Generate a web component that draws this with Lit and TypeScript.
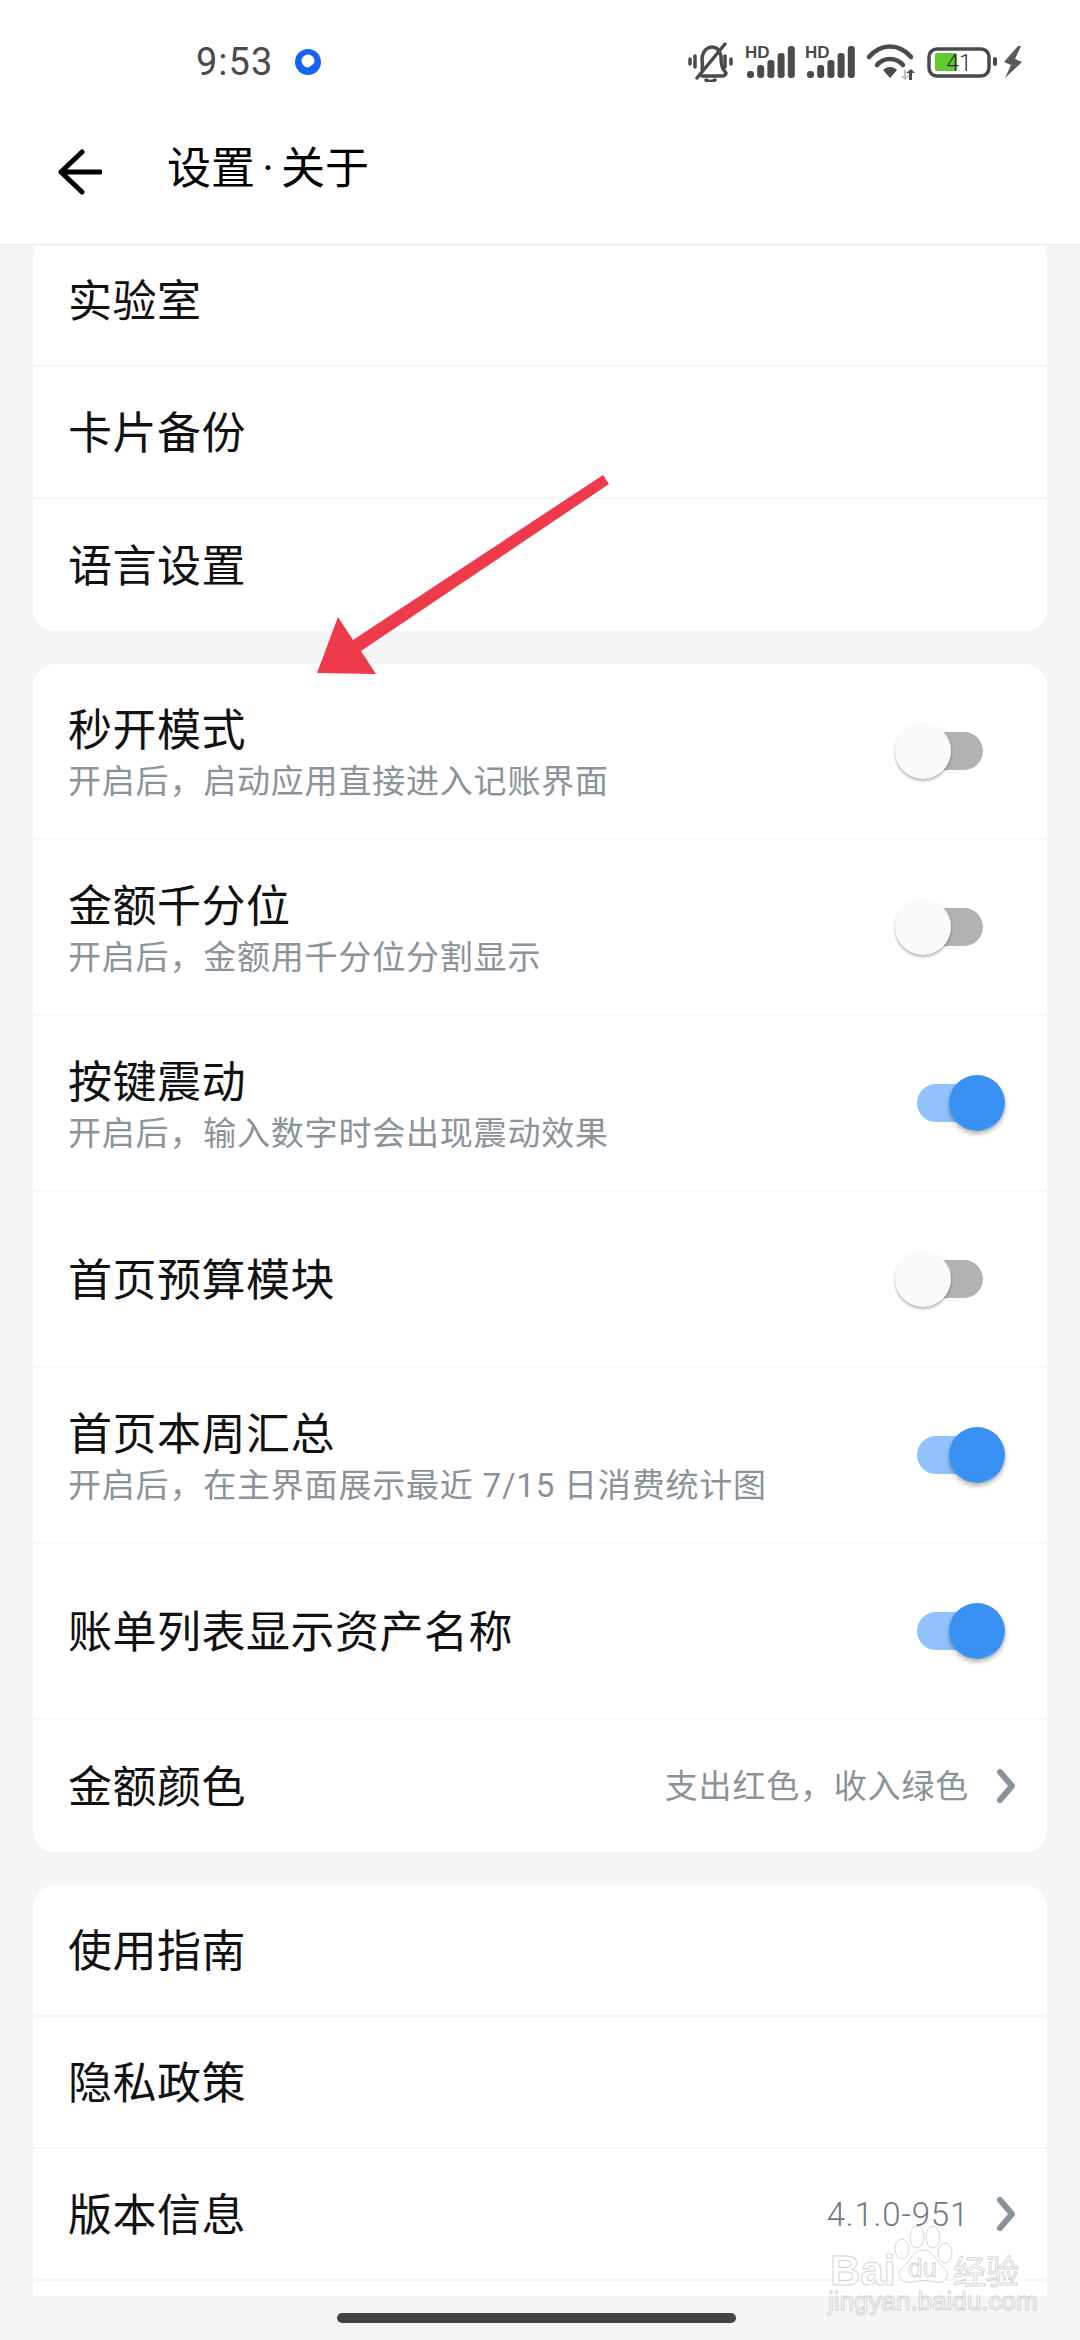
import { LitElement, css, html, svg } from 'lit';
import { customElement } from 'lit/decorators.js';

type Row = { title?: string; sub?: string; on?: boolean; value?: string };

const group1: Row[] = [{ title: '实验室' }, { title: '卡片备份' }, { title: '语言设置' }];
const group2: Row[] = [
  { title: '秒开模式', sub: '开启后，启动应用直接进入记账界面', on: false },
  { title: '金额千分位', sub: '开启后，金额用千分位分割显示', on: false },
  { title: '按键震动', sub: '开启后，输入数字时会出现震动效果', on: true },
  { title: '首页预算模块', on: false },
  { title: '首页本周汇总', sub: '开启后，在主界面展示最近 7/15 日消费统计图', on: true },
  { title: '账单列表显示资产名称', on: true },
  { title: '金额颜色', value: '支出红色，收入绿色' },
];
// last row runs under the nav bar, only its top edge shows
const group3: Row[] = [{ title: '使用指南' }, { title: '隐私政策' }, { title: '版本信息', value: '4.1.0-951' }, {}];

@customElement('app-root')
export class AppRoot extends LitElement {
  static styles = css`
    :host {
      display: flex;
      flex-direction: column;
      position: relative;
      width: 1080px;
      height: 2340px;
      overflow: hidden;
      background: #f4f5f7;
      font-family: "Roboto", "Noto Sans CJK SC", sans-serif;
      color: #111;
    }

    .top {
      flex: none;
      box-sizing: border-box;
      background: #fff;
      height: 245px;
      border-bottom: 1px solid #e6e7e9;
    }

    .status {
      height: 124px;
      padding: 0 52px 0 196px;
      display: flex;
      align-items: center;
      color: #4a4a4a;
    }

    .time {
      font-size: 38px;
      letter-spacing: 1px;
    }

    .dot {
      margin-left: 22px;
    }

    .status-right {
      margin-left: auto;
      display: block;
    }

    .bar {
      display: flex;
      align-items: center;
      height: 96px;
      padding-left: 58px;
    }

    .bar h1 {
      display: flex;
      align-items: center;
      margin: -6px 0 0 65px;
      font-size: 44px;
      line-height: 56px;
      font-weight: 400;
      color: #000;
    }

    .bar .sep {
      width: 26px;
      text-align: center;
    }

    .scroll {
      flex: 1;
      min-height: 0;
      overflow: hidden;
    }

    .list {
      margin-top: -10px;
      padding: 0 33px;
      display: flex;
      flex-direction: column;
      gap: 33px;
    }

    .card {
      background: #fff;
      border-radius: 22px;
      overflow: hidden;
    }

    .row {
      display: flex;
      align-items: center;
      padding: 0 32px 0 35px;
      height: 132px;
      box-sizing: border-box;
      border-bottom: 2px solid #f6f7f8;
    }

    .row:last-child {
      border-bottom: 0;
    }

    .row.tall {
      height: 176px;
    }

    .text {
      flex: 1;
      min-width: 0;
      padding-top: 3px;
    }

    .text.has-sub {
      padding-top: 4px;
    }

    .title {
      font-size: 44px;
      line-height: 56px;
      letter-spacing: 0.5px;
      color: #111;
    }

    .sub {
      margin-top: 1px;
      font-size: 33px;
      line-height: 44px;
      color: #8a929a;
      letter-spacing: 0.8px;
    }

    .value {
      font-size: 33px;
      padding-bottom: 4px;
      color: #8a929a;
      letter-spacing: 0.8px;
    }

    .value.num {
      padding-bottom: 0;
      font-weight: 300;
      color: #6f7a85;
    }

    .chevron {
      margin-left: 28px;
      display: block;
    }

    .switch {
      position: relative;
      width: 66px;
      height: 38px;
      margin-right: 32px;
      border-radius: 19px;
      background: #b2b2b2;
    }

    .switch::after {
      content: "";
      position: absolute;
      top: -9px;
      left: -22px;
      width: 56px;
      height: 56px;
      border-radius: 50%;
      background: #fafafa;
      box-shadow: 0 2px 3px rgba(0, 0, 0, 0.3);
    }

    .switch.on {
      background: #90c3fb;
    }

    .switch.on::after {
      left: 32px;
      background: #3891f3;
      box-shadow: 0 3px 5px rgba(0, 0, 0, 0.3);
    }

    .nav {
      flex: none;
      box-sizing: border-box;
      height: 44px;
      padding-top: 17px;
      background: #f4f5f7;
    }

    .home {
      margin-left: 337px;
      width: 399px;
      height: 10px;
      border-radius: 5px;
      background: #444;
    }

    .arrow {
      position: absolute;
      left: 0;
      top: 0;
      pointer-events: none;
    }

    .mark {
      position: absolute;
      left: 820px;
      top: 2220px;
      pointer-events: none;
      font-family: "Liberation Sans", "Noto Sans CJK SC", sans-serif;
    }
  `;

  renderRow(r: Row) {
    const tall = r.sub !== undefined || r.on !== undefined;
    return html`
      <div class="row ${tall ? 'tall' : ''}">
        <div class="text ${r.sub ? 'has-sub' : ''}">
          <div class="title">${r.title}</div>
          ${r.sub ? html`<div class="sub">${r.sub}</div>` : ''}
        </div>
        ${r.on !== undefined ? html`<div class="switch ${r.on ? 'on' : ''}"></div>` : ''}
        ${r.value
          ? html`<span class="value ${r.value.startsWith('4') ? 'num' : ''}">${r.value}</span>
              <svg class="chevron" width="18" height="34" viewBox="0 0 18 34">
                <path d="M3 3 L15 17 L3 31" fill="none" stroke="#8a939c" stroke-width="6" stroke-linecap="round" stroke-linejoin="round" />
              </svg>`
          : ''}
      </div>
    `;
  }

  renderStatusIcons() {
    const signal = (x: number) => svg`
      <text x=${x} y="16" font-size="17" font-weight="700" font-family="Liberation Sans" fill="#4a4a4a">HD</text>
      ${[29, 23, 18, 11, 4].map((top, i) => svg`<rect x=${x + 2 + i * 10.2} y=${top} width="7" height=${36 - top} rx="3" fill="#4a4a4a" />`)}
    `;
    return html`
      <svg class="status-right" width="340" height="40" viewBox="0 0 340 40">
        <g fill="none" stroke="#4a4a4a" stroke-width="3.5" stroke-linecap="round" stroke-linejoin="round">
          <path d="M14 27 C15 23 14 19 14 16 C15 8 20 5 24 5 C29 5 32 9 33 14 C33 20 33 26 38 31 C38 33 36 34 34 34 H14" />
          <path d="M37 2 L9 36" />
          <path d="M2 17 V22 M7 14 V25 M37 14 V25 M43 17 V22" />
          <path d="M18 38 C21 40 24 40 27 38" />
        </g>
        ${signal(57)}
        ${signal(117)}
        <g fill="none" stroke="#4a4a4a" stroke-width="4.5" stroke-linecap="round">
          <path d="M181 15 C193 1 211 1 223 15" />
          <path d="M189 23 C196 15 208 15 215 23" />
        </g>
        <path d="M195 28 C199 24 205 24 209 28 L202 36 Z" fill="#4a4a4a" />
        <path d="M216 28 V34 H213 L217 38 L221 34 H218 V28 Z" fill="#bdbdbd" />
        <path d="M221 38 V31 H218 L223 27 L227 31 H224 V38 Z" fill="#4a4a4a" />
        <rect x="241" y="7" width="60" height="27" rx="8" fill="none" stroke="#4a4a4a" stroke-width="3.5" />
        <rect x="247" y="11" width="22" height="18" rx="2" fill="#62c92f" />
        <text x="271" y="29" font-size="23" font-weight="300" text-anchor="middle" font-family="Roboto" fill="#2e2e2e">41</text>
        <rect x="305" y="15" width="4" height="9" rx="2" fill="#4a4a4a" />
        <path d="M330 4 L316 20 L323 23 L317 36 L334 20 L327 17 L333 4 Z" fill="#5a5a5a" />
      </svg>
    `;
  }

  renderWatermark() {
    return html`
      <svg class="mark" width="230" height="115" viewBox="0 0 230 115" fill="rgba(255,255,255,0.7)" stroke="rgba(170,170,170,0.5)" stroke-width="1">
        <ellipse cx="82" cy="29" rx="7" ry="10" />
        <ellipse cx="97" cy="17" rx="7" ry="11" />
        <ellipse cx="113" cy="17" rx="7" ry="11" />
        <ellipse cx="125" cy="33" rx="7" ry="10" />
        <path d="M103 30 C113 30 116 42 123 47 C132 54 126 64 116 62 C108 60 100 60 92 62 C82 64 74 54 83 47 C90 42 93 30 103 30 Z" />
        <text x="10" y="65" font-size="42" font-weight="700">Bai</text>
        <text x="88" y="57" font-size="26">du</text>
        <text x="133" y="64" font-size="33">经验</text>
        <text x="8" y="90" font-size="26">jingyan.baidu.com</text>
      </svg>
    `;
  }

  render() {
    return html`
      <div class="top">
        <div class="status">
          <span class="time">9:53</span>
          <svg class="dot" width="26" height="26" viewBox="0 0 26 26">
            <circle cx="13" cy="13" r="13" fill="#1763f5" />
            <circle cx="13" cy="12" r="6.5" fill="#fff" />
            <path d="M12 20 L19 20 L20 13 C18 16 15 17 12 20 Z" fill="#1763f5" />
          </svg>
          ${this.renderStatusIcons()}
        </div>
        <div class="bar">
          <svg width="44" height="46" viewBox="0 0 44 46">
            <path d="M42 23 H3 M24 3 L3 23 L24 43" fill="none" stroke="#000" stroke-width="5" stroke-linecap="round" stroke-linejoin="round" />
          </svg>
          <h1>设置<span class="sep">·</span>关于</h1>
        </div>
      </div>
      <div class="scroll">
        <div class="list">
          <div class="card">${group1.map(r => this.renderRow(r))}</div>
          <div class="card">${group2.map(r => this.renderRow(r))}</div>
          <div class="card">${group3.map(r => this.renderRow(r))}</div>
        </div>
      </div>
      <div class="nav"><div class="home"></div></div>
      <svg class="arrow" width="1080" height="2340" viewBox="0 0 1080 2340">
        <path d="M603 475 L609 484 L361 651 L376 674 L317 673 L338 617 L353 640 Z" fill="#ee3a4b" />
      </svg>
      ${this.renderWatermark()}
    `;
  }
}
